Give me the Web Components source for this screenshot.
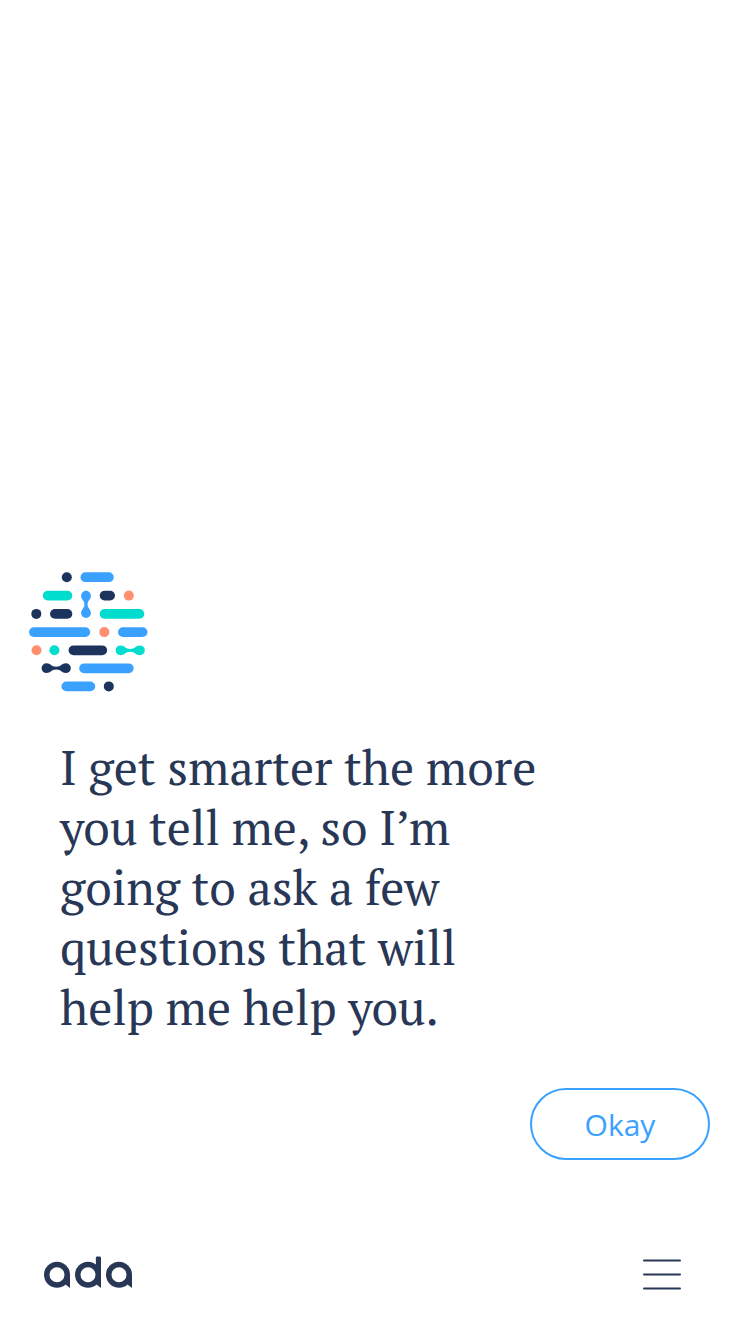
<!DOCTYPE html>
<html lang="en">
<head>
<meta charset="utf-8">
<title>Ada</title>
<style>
html,body{margin:0;height:100%;background:#fff}
</style>
</head>
<body>
<ada-screen>
  <ada-emblem></ada-emblem>
  <ada-message>I get smarter the more you tell me, so I’m going to ask a few questions that will help me help you.</ada-message>
  <ada-button slot="actions">Okay</ada-button>
  <ada-wordmark slot="footer"></ada-wordmark>
  <ada-menu slot="footer"></ada-menu>
</ada-screen>
<script>
function define(name, html) {
  const template = document.createElement('template');
  template.innerHTML = html;
  customElements.define(name, class extends HTMLElement {
    constructor() {
      super();
      this.attachShadow({mode: 'open'}).append(template.content.cloneNode(true));
    }
  });
}

define('ada-screen', `
<style>
:host{display:flex;flex-direction:column;box-sizing:border-box;width:750px;height:1334px;background:#fff;overflow:hidden}
main{flex:1;display:flex;flex-direction:column;justify-content:flex-end}
.actions{display:flex;justify-content:flex-end;padding:50px 40px 0 0}
footer{display:flex;justify-content:space-between;align-items:center;height:120px;margin-top:54px;padding:0 65px 0 40px;box-sizing:border-box}
</style>
<main><slot></slot></main>
<div class="actions"><slot name="actions"></slot></div>
<footer><slot name="footer"></slot></footer>`);

define('ada-emblem', `
<style>:host{display:block;height:130px;padding-left:24px}svg{display:block}</style>
<svg width="130" height="130" viewBox="24 567 130 130" role="img" aria-label="Ada">
<g fill="#1c335d">
<circle cx="66.8" cy="577.2" r="5"/>
<rect x="99.7" y="590.7" width="15.3" height="9.8" rx="4.9"/>
<circle cx="36.3" cy="613.9" r="5"/>
<rect x="50" y="609" width="22.3" height="9.8" rx="4.9"/>
<rect x="68.6" y="645.4" width="38.5" height="9.8" rx="4.9"/>
<circle cx="108.8" cy="686.4" r="5"/>
<path d="M46.5 663.300c4 0 5 3.500 9.700 3.500s5.700-3.500 9.700-3.500a4.900 4.900 0 0 1 0 9.800c-4 0-5-3.500-9.700-3.500s-5.700 3.500-9.700 3.500a4.900 4.900 0 0 1 0-9.800z"/>
</g>
<g fill="#3ba1ff">
<rect x="80.500" y="572.300" width="33.200" height="9.800" rx="4.900"/>
<rect x="29" y="627.200" width="61.200" height="9.800" rx="4.900"/>
<rect x="118" y="627.200" width="29.500" height="9.800" rx="4.900"/>
<rect x="79.200" y="663.400" width="54.400" height="9.800" rx="4.900"/>
<rect x="61.500" y="681.500" width="33.700" height="9.800" rx="4.900"/>
<path d="M81.100 595.700a4.900 4.900 0 0 1 9.800 0c0 4-3.300 4.400-3.300 8.700s3.300 4.700 3.300 8.700a4.900 4.900 0 0 1-9.800 0c0-4 3.300-4.400 3.300-8.700s-3.300-4.700-3.300-8.700z"/>
</g>
<g fill="#00dccd">
<rect x="42.800" y="590.700" width="29.500" height="9.800" rx="4.900"/>
<rect x="99.700" y="609" width="44.600" height="9.800" rx="4.900"/>
<circle cx="54.400" cy="650.300" r="5"/>
<path d="M120.500 645.400c4 0 5 3.500 9.700 3.500s5.700-3.500 9.700-3.500a4.900 4.900 0 0 1 0 9.800c-4 0-5-3.500-9.700-3.500s-5.700 3.500-9.700 3.500a4.900 4.900 0 0 1 0-9.800z"/>
</g>
<g fill="#ff8f6e">
<circle cx="128.800" cy="595.600" r="5"/>
<circle cx="104.300" cy="632.100" r="5"/>
<circle cx="36.500" cy="650.300" r="5"/>
</g>
</svg>`);

define('ada-message', `
<style>:host{display:block;width:480px;padding:40px 0 1px 60px;font:48px/60px "PT Serif","Liberation Serif",serif;letter-spacing:-.02px;color:#293756}</style>
<slot></slot>`);

define('ada-button', `
<style>
:host{display:block}
button{display:block;box-sizing:border-box;width:180px;height:72px;padding:1px 0 0;border:2px solid #3ba1ff;border-radius:36px;background:#fff;color:#3ba1ff;font:30px/40px "Open Sans","Noto Sans",sans-serif}
</style>
<button><slot></slot></button>`);

define('ada-wordmark', `
<style>:host{display:block}svg{display:block}</style>
<svg width="96" height="40" viewBox="40 1254 96 40" role="img" aria-label="ada" fill="none" stroke="#293756" stroke-width="5.500">
<circle cx="57" cy="1274.700" r="10.250"/><circle cx="88" cy="1274.700" r="10.250"/><circle cx="119" cy="1274.700" r="10.250"/>
<g fill="#293756" stroke="none">
<path d="M65.500 1274.700h4.500v13.300l-4.500-3.500z"/>
<path d="M95.800 1258q0-1.400 1.400-1.400h2.400q1.400 0 1.400 1.400v30l-4.500-3.500z"/>
<path d="M127.500 1274.700h4.500v13.300l-4.500-3.500z"/>
</g>
</svg>`);

define('ada-menu', `
<style>:host{display:block}svg{display:block}</style>
<svg width="46" height="40" viewBox="639 1254 46 40" role="img" aria-label="Menu" stroke="#293756" stroke-width="2" stroke-linecap="round">
<path d="M644 1260.500h36M644 1274.500h36M644 1288.500h36"/>
</svg>`);
</script>
</body>
</html>
